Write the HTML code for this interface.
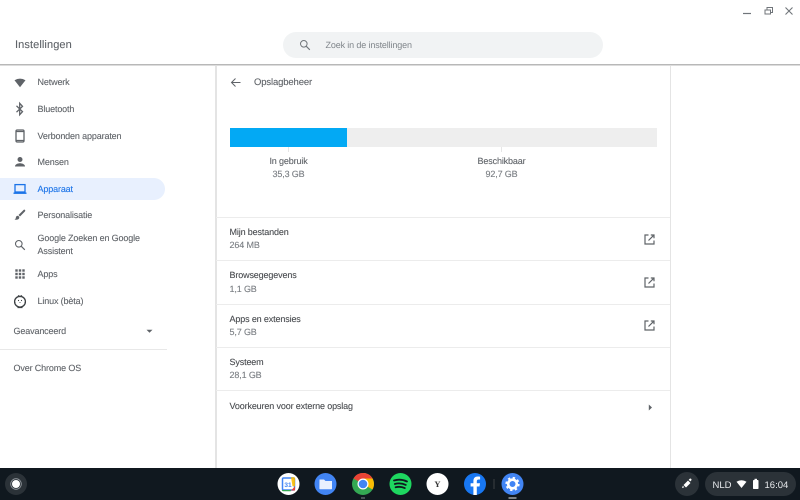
<!DOCTYPE html>
<html><head><meta charset="utf-8">
<style>
html,body{margin:0;padding:0;width:800px;height:500px;overflow:hidden;background:#fff}
body{position:relative;font-family:"Liberation Sans",sans-serif;color:#5f6368;font-size:9px;filter:blur(.3px);text-rendering:geometricPrecision}
.t{position:absolute;white-space:nowrap;line-height:12px;letter-spacing:-.14px;-webkit-text-stroke:.1px currentColor}
.d{color:#484b4f}
.g{color:#797d82}
.c{text-align:center;transform:translateX(-50%)}
.r{position:absolute;background:#ececec;height:1px;left:216px;width:454px}
svg{position:absolute;overflow:visible}
</style></head><body>
<!-- window controls -->
<svg style="left:0;top:0" width="800" height="30">
<path d="M743 13.500h8" stroke="#70757a" stroke-width="1.200" fill="none"/>
<path d="M765 10v4h5.500v-4zM767 10v-2.500h5.500v5h-2" stroke="#70757a" stroke-width="1" fill="none"/>
<path d="M785.500 7.500l7 7M792.500 7.500l-7 7" stroke="#70757a" stroke-width="1.100" fill="none"/>
</svg>
<div class="t" style="left:15px;top:39px;font-size:11px;line-height:13px;letter-spacing:.1px">Instellingen</div>
<div style="position:absolute;left:283px;top:32px;width:320px;height:26px;border-radius:13px;background:#f1f3f4"></div>
<svg style="left:299px;top:39px" width="12" height="12" viewBox="0 0 12 12"><circle cx="4.800" cy="4.800" r="3.300" fill="none" stroke="#70757a" stroke-width="1"/><path d="M7.300 7.300l3.500 3.500" stroke="#70757a" stroke-width="1.100"/></svg>
<div class="t" style="left:325.500px;top:39px;color:#80868b;font-size:9px;-webkit-text-stroke:0">Zoek in de instellingen</div>
<div style="position:absolute;left:0;top:64px;width:800px;height:1px;background:#b8b8b8"></div>
<div style="position:absolute;left:0;top:65px;width:800px;height:1px;background:#dcdcdc"></div>

<!-- sidebar -->
<div style="position:absolute;left:0;top:178px;width:165px;height:22px;background:#e8f0fe;border-radius:0 11px 11px 0"></div>
<svg style="left:14px;top:78px" width="12" height="10" viewBox="0 0 12 10"><path d="M0.500 2.300Q6 -1 11.500 2.300L6 9.200z" fill="#5f6368"/></svg>
<svg style="left:15px;top:102px" width="10" height="14" viewBox="0 0 10 14"><path d="M1.500 3.800L7.500 9.700 4.700 12.700V1.300L7.500 4.300 1.500 10.200" fill="none" stroke="#5f6368" stroke-width="1.300"/></svg>
<svg style="left:15px;top:129px" width="10" height="14" viewBox="0 0 10 14"><rect x="1" y="1" width="8" height="12" rx="1.200" fill="none" stroke="#5f6368" stroke-width="1.300"/><path d="M1 2.500h8M1 11.500h8" stroke="#5f6368" stroke-width="1.200"/></svg>
<svg style="left:14px;top:156px" width="12" height="12" viewBox="0 0 12 12"><circle cx="6" cy="3.500" r="2.500" fill="#5f6368"/><path d="M1 10.500c0-2.200 3-3.200 5-3.200s5 1 5 3.200z" fill="#5f6368"/></svg>
<svg style="left:13px;top:183px" width="14" height="12" viewBox="0 0 14 12"><rect x="2" y="1.600" width="10" height="7.400" fill="none" stroke="#1a73e8" stroke-width="1.300"/><path d="M0.500 10.200h13" stroke="#1a73e8" stroke-width="1.400"/></svg>
<svg style="left:14px;top:209px" width="12" height="12" viewBox="0 0 12 12"><path d="M4.500 6L9.800 .8q1 -.4 1.400 .4q.3 .7 -.3 1.300L6 7.500zM3.500 6.800q1.800 .2 1.800 2q-.3 2 -3.300 2H.5q1.300-.8 1.400-2.300q.1-1.400 1.600-1.700z" fill="#5f6368"/></svg>
<svg style="left:14px;top:239px" width="12" height="12" viewBox="0 0 12 12"><circle cx="4.800" cy="4.800" r="3.300" fill="none" stroke="#5f6368" stroke-width="1.100"/><path d="M7.300 7.300l3.500 3.500" stroke="#5f6368" stroke-width="1.200"/></svg>
<svg style="left:15px;top:269px" width="10" height="10" viewBox="0 0 10 10" fill="#5f6368"><rect x="0.300" y="0.300" width="2.400" height="2.400"/><rect x="3.800" y="0.300" width="2.400" height="2.400"/><rect x="7.300" y="0.300" width="2.400" height="2.400"/><rect x="0.300" y="3.800" width="2.400" height="2.400"/><rect x="3.800" y="3.800" width="2.400" height="2.400"/><rect x="7.300" y="3.800" width="2.400" height="2.400"/><rect x="0.300" y="7.300" width="2.400" height="2.400"/><rect x="3.800" y="7.300" width="2.400" height="2.400"/><rect x="7.300" y="7.300" width="2.400" height="2.400"/></svg>
<svg style="left:13px;top:294px" width="14" height="15" viewBox="0 0 14 15"><circle cx="7" cy="7.700" r="5.400" fill="none" stroke="#3c4043" stroke-width="1.300"/><path d="M5 1.500L7 2.700 9 1.500M1 8.500h1.500M11.500 8.500H13M4.500 13.600h5" stroke="#3c4043" stroke-width="1.100" fill="none"/><circle cx="5.500" cy="6.500" r=".6" fill="#3c4043"/><circle cx="8.500" cy="6.500" r=".6" fill="#3c4043"/><path d="M6.200 8h1.600L7 9z" fill="#3c4043"/></svg>

<div class="t" style="left:37.500px;top:76px">Netwerk</div>
<div class="t" style="left:37.500px;top:103px">Bluetooth</div>
<div class="t" style="left:37.500px;top:129.500px">Verbonden apparaten</div>
<div class="t" style="left:37.500px;top:156px">Mensen</div>
<div class="t" style="left:37.500px;top:182.500px;color:#1a73e8">Apparaat</div>
<div class="t" style="left:37.500px;top:209px">Personalisatie</div>
<div class="t" style="left:37.500px;top:232px">Google Zoeken en Google</div>
<div class="t" style="left:37.500px;top:245px">Assistent</div>
<div class="t" style="left:37.500px;top:268px">Apps</div>
<div class="t" style="left:37.500px;top:295px">Linux (bèta)</div>
<div class="t" style="left:13.500px;top:325px">Geavanceerd</div>
<svg style="left:146px;top:329px" width="7" height="5" viewBox="0 0 7 5"><path d="M0.500 .8h6L3.500 3.800z" fill="#5f6368"/></svg>
<div style="position:absolute;left:0;top:349px;width:167px;height:1px;background:#e8e8e8"></div>
<div class="t" style="left:13.500px;top:362px">Over Chrome OS</div>

<!-- main card -->
<div style="position:absolute;left:215px;top:66px;width:1.500px;height:402px;background:#e4e4e4"></div>
<div style="position:absolute;left:669.500px;top:66px;width:1.500px;height:402px;background:#e4e4e4"></div>
<svg style="left:230px;top:77px" width="11" height="11" viewBox="0 0 11 11"><path d="M10.500 5.500H1.500M5.500 1.500l-4 4 4 4" fill="none" stroke="#5f6368" stroke-width="1"/></svg>
<div class="t" style="left:254px;top:76.500px;font-size:9.500px">Opslagbeheer</div>
<div style="position:absolute;left:229.500px;top:128px;width:427px;height:19px;background:#eeeeee"></div>
<div style="position:absolute;left:229.500px;top:128px;width:117.500px;height:19px;background:#03a9f4"></div>
<div style="position:absolute;left:288px;top:147px;width:1px;height:5px;background:#e6e6e6"></div>
<div style="position:absolute;left:501px;top:147px;width:1px;height:5px;background:#e6e6e6"></div>
<div class="t c" style="left:288.500px;top:155px">In gebruik</div>
<div class="t c g" style="left:288.500px;top:168px">35,3 GB</div>
<div class="t c" style="left:501.500px;top:155px">Beschikbaar</div>
<div class="t c g" style="left:501.500px;top:168px">92,7 GB</div>

<div class="r" style="top:217px"></div>
<div class="r" style="top:260px"></div>
<div class="r" style="top:304px"></div>
<div class="r" style="top:347px"></div>
<div class="r" style="top:390px"></div>

<div class="t d" style="left:229.500px;top:226px">Mijn bestanden</div>
<div class="t g" style="left:229.500px;top:239px">264 MB</div>
<div class="t d" style="left:229.500px;top:269px">Browsegegevens</div>
<div class="t g" style="left:229.500px;top:282.500px">1,1 GB</div>
<div class="t d" style="left:229.500px;top:312.500px">Apps en extensies</div>
<div class="t g" style="left:229.500px;top:326px">5,7 GB</div>
<div class="t d" style="left:229.500px;top:356px">Systeem</div>
<div class="t g" style="left:229.500px;top:369px">28,1 GB</div>
<div class="t d" style="left:229.500px;top:400px">Voorkeuren voor externe opslag</div>

<svg style="left:644px;top:234px" width="11" height="11" viewBox="0 0 11 11"><path d="M4.500 1H1v9h9V6.500M4.500 6.500L9.800 1.200M6.800 1h3.200v3.200" fill="none" stroke="#5f6368" stroke-width="1.200"/></svg>
<svg style="left:644px;top:277px" width="11" height="11" viewBox="0 0 11 11"><path d="M4.500 1H1v9h9V6.500M4.500 6.500L9.800 1.200M6.800 1h3.200v3.200" fill="none" stroke="#5f6368" stroke-width="1.200"/></svg>
<svg style="left:644px;top:320px" width="11" height="11" viewBox="0 0 11 11"><path d="M4.500 1H1v9h9V6.500M4.500 6.500L9.800 1.200M6.800 1h3.200v3.200" fill="none" stroke="#5f6368" stroke-width="1.200"/></svg>
<svg style="left:648px;top:404px" width="5" height="7" viewBox="0 0 5 7"><path d="M.8 .5v6L4 3.500z" fill="#5f6368"/></svg>

<!-- shelf -->
<div style="position:absolute;left:0;top:468px;width:800px;height:32px;background:#10181f"></div>
<svg style="left:0;top:468px" width="800" height="32" viewBox="0 0 800 32">
<circle cx="16" cy="16" r="11" fill="#2b3238"/>
<circle cx="16" cy="16" r="4" fill="#fff"/><circle cx="16" cy="16" r="5.300" fill="none" stroke="#9aa0a6" stroke-width=".8"/>
<!-- calendar -->
<circle cx="288.500" cy="16" r="11" fill="#fff"/>
<rect x="282.500" y="10" width="12" height="12" rx="1" fill="#fff" stroke="#4285f4" stroke-width="1.500"/>
<path d="M281.800 22h9v1.200h-7.500a1.500 1.500 0 0 1-1.500-1.500z" fill="#34a853"/>
<path d="M291 22.500l4-4v4z" fill="#ea4335"/><path d="M291 9.300h3a1 1 0 0 1 1 1v8h-2.500z" fill="#fbbc04" opacity=".9"/>
<text x="288" y="19" font-family="Liberation Sans" font-size="6.500" font-weight="bold" text-anchor="middle" fill="#4285f4">31</text>
<!-- files -->
<circle cx="325.500" cy="16" r="11" fill="#4285f4"/>
<path d="M319.500 11.500h4.500l1.500 1.500h6.500v7.500a.8 .8 0 0 1-.8 .8h-11a.8 .8 0 0 1-.8-.8z" fill="#e8f0fe"/>
<!-- chrome -->
<circle cx="363" cy="16" r="11" fill="#34a853"/>
<path d="M363 16L353.500 10.500A11 11 0 0 1 372.500 10.500z" fill="#ea4335"/>
<path d="M363 5A11 11 0 0 1 372.500 21.500L363 16z" fill="#fbbc04"/>
<path d="M353.500 10.500A11 11 0 0 1 363 5A11 11 0 0 1 372.500 10.500H363z" fill="#ea4335"/>
<circle cx="363" cy="16" r="5.500" fill="#fff"/><circle cx="363" cy="16" r="4.300" fill="#4285f4"/>
<rect x="361" y="29.500" width="4" height="1" fill="#80868b"/>
<!-- spotify -->
<circle cx="400.500" cy="16" r="11" fill="#1ed760"/>
<path d="M394 12.500q6.500-2 13 1M394.800 16q5.500-1.600 11 .9M395.600 19.300q4.600-1.300 9.200 .8" fill="none" stroke="#10181f" stroke-width="1.800" stroke-linecap="round"/>
<!-- Y -->
<circle cx="437.500" cy="16" r="11" fill="#fff"/>
<text x="437.500" y="19" font-family="Liberation Serif" font-size="8.500" font-weight="bold" text-anchor="middle" fill="#333">Y</text>
<!-- facebook -->
<circle cx="475" cy="16" r="11" fill="#1877f2"/>
<path d="M476.800 27v-8.500h2.700l.5-3.200h-3.200v-2c0-1 .5-1.800 1.900-1.800h1.400V8.700c-.8-.1-1.600-.2-2.300-.2-2.700 0-4.400 1.600-4.400 4.500v2.300h-2.800v3.200h2.800V27z" fill="#fff"/>
<rect x="493.500" y="11" width="1" height="10" fill="#3c4043"/>
<!-- settings -->
<circle cx="512.500" cy="16" r="11" fill="#4285f4"/>
<circle cx="512.500" cy="16" r="4.300" fill="none" stroke="#fff" stroke-width="2.600"/>
<circle cx="512.500" cy="16" r="6.300" fill="none" stroke="#fff" stroke-width="1.700" stroke-dasharray="2.400 2.550"/>
<rect x="508.500" y="29.500" width="8" height="1" fill="#e8eaed"/>
<!-- stylus -->
<circle cx="687" cy="16" r="12" fill="#2b3238"/>
<path d="M688 12.500l2.500 2.500-4.500 4.500-2.500-2.500zM688.700 11.800l1-1q.8-.6 1.500 .1t.1 1.500l-1 1zM682.800 17.800l1.500 1.500-2.300 .8z" fill="#fff"/>
<!-- tray -->
<rect x="705" y="4" width="91" height="24" rx="12" fill="#2b3238"/>
<path d="M736.500 13.700Q741.500 10.700 746.500 13.700L741.500 20z" fill="#fff"/>
<rect x="753" y="12" width="5.500" height="9" rx=".8" fill="#fff"/><rect x="754.500" y="10.800" width="2.500" height="1.400" fill="#fff"/>
<text x="712.500" y="19.800" font-family="Liberation Sans" font-size="9.500" fill="#e8eaed">NLD</text>
<text x="764.500" y="19.800" font-family="Liberation Sans" font-size="9.500" fill="#e8eaed">16:04</text>
</svg>
</body></html>
